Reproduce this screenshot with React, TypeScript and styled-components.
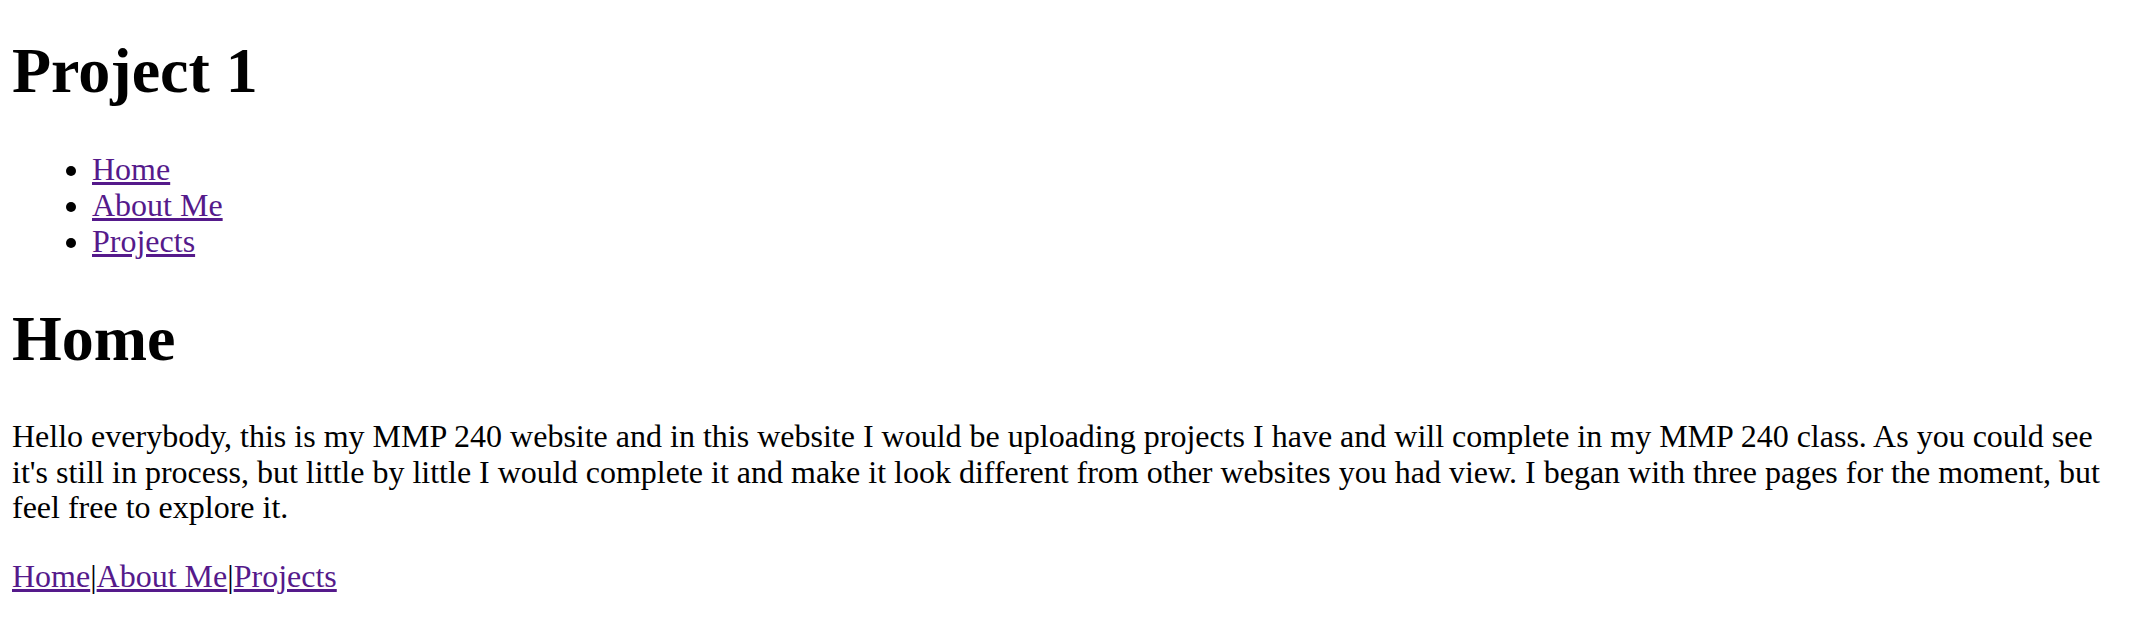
import React from "react";
import styled, { createGlobalStyle } from "styled-components";

const GlobalStyle = createGlobalStyle`
  html, body {
    background: #ffffff;
  }
  body {
    margin: 12px;
    font-family: "Liberation Serif", "Times New Roman", Times, serif;
    font-size: 32px;
    color: #000000;
  }
`;

const Title = styled.h1`
  font-size: 64px;
  font-weight: bold;
  margin: 22px 0 43px;
`;

const SectionTitle = styled.h2`
  font-size: 64px;
  font-weight: bold;
  margin: 43px 0;
`;

const NavList = styled.ul`
  margin: 32px 0;
  padding-left: 80px;
  list-style: disc;
`;

const NavItem = styled.li`
  line-height: 36px;
`;

const Link = styled.a`
  color: #551a8b;
  text-decoration: underline;
  cursor: pointer;
`;

const Paragraph = styled.p`
  margin: 32px 0;
  line-height: 35.5px;
`;

const FooterNav = styled.p`
  margin: 32px 0;
`;

const links = ["Home", "About Me", "Projects"];

export default function App() {
  return (
    <>
      <GlobalStyle />
      <Title>Project 1</Title>
      <NavList>
        {links.map((l) => (
          <NavItem key={l}>
            <Link href="#">{l}</Link>
          </NavItem>
        ))}
      </NavList>
      <SectionTitle>Home</SectionTitle>
      <Paragraph>
        Hello everybody, this is my MMP 240 website and in this website I would be uploading
        projects I have and will complete in my MMP 240 class. As you could see it's still in
        process, but little by little I would complete it and make it look different from other
        websites you had view. I began with three pages for the moment, but feel free to explore it.
      </Paragraph>
      <FooterNav>
        {links.map((l, i) => (
          <React.Fragment key={l}>
            {i > 0 && "|"}
            <Link href="#">{l}</Link>
          </React.Fragment>
        ))}
      </FooterNav>
    </>
  );
}
